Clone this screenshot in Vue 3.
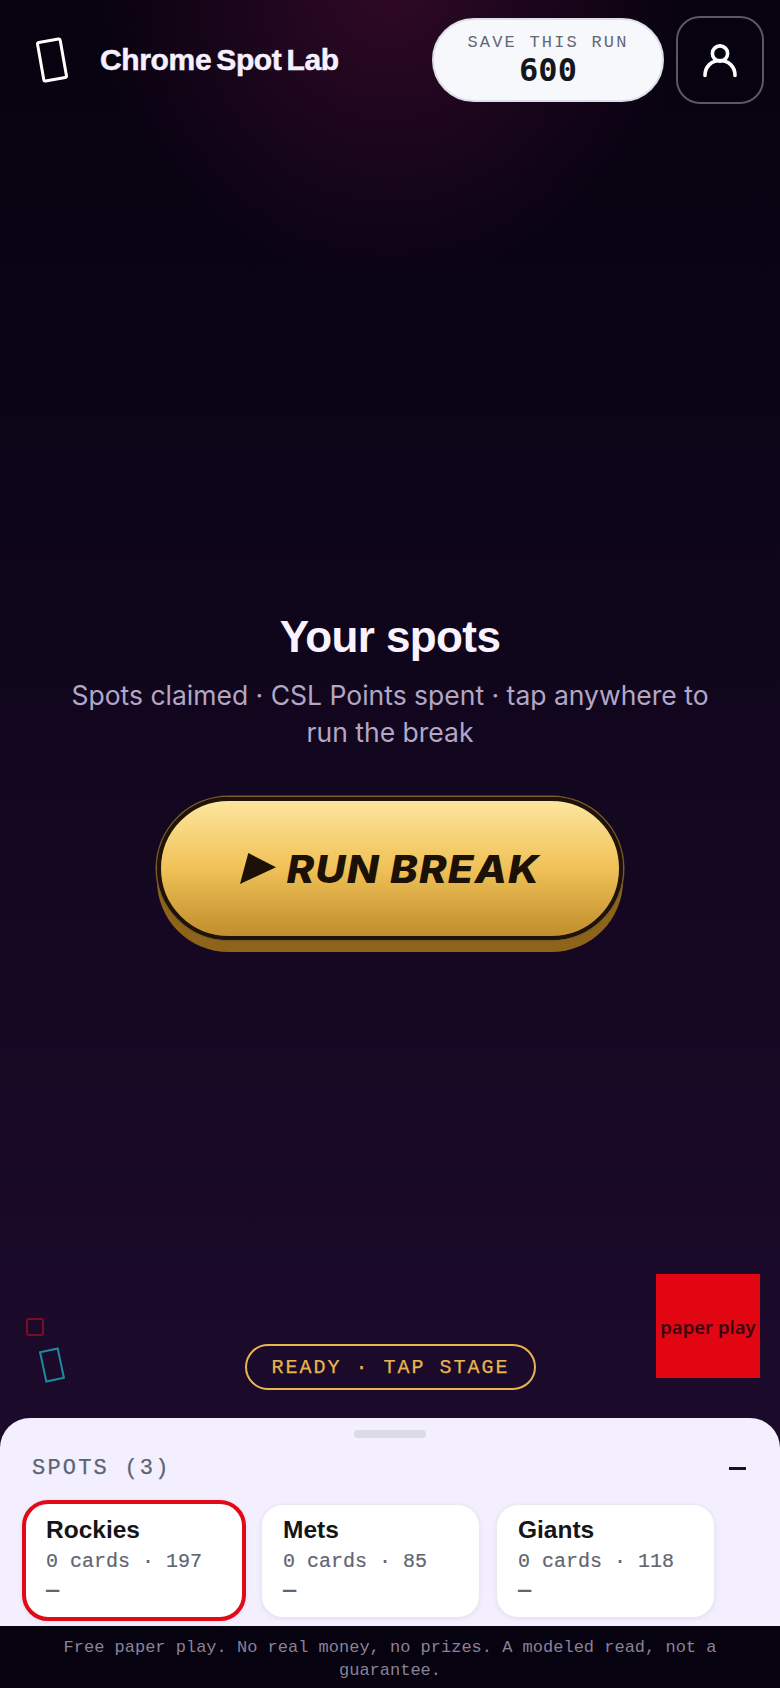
<script setup>
const spots = [
  { id: 'rockies', name: 'Rockies', cards: 0, points: 197, active: true },
  { id: 'mets', name: 'Mets', cards: 0, points: 85, active: false },
  { id: 'giants', name: 'Giants', cards: 0, points: 118, active: false },
]
</script>

<template>
  <div class="app">
    <header class="topbar">
      <div class="brand">
        <span class="brand-card"></span>
        <span class="brand-name">Chrome Spot Lab</span>
      </div>
      <button class="save-pill" type="button">
        <span class="save-label">SAVE THIS RUN</span>
        <span class="save-value">600</span>
      </button>
      <button class="profile" type="button" aria-label="Profile">
        <svg width="36" height="36" viewBox="0 0 36 36" fill="none" stroke="#fff" stroke-width="3.6" stroke-linecap="round">
          <circle cx="18" cy="11.5" r="7.6" />
          <path d="M3 33.5c0-9 6.5-15 15-15s15 6 15 15" />
        </svg>
      </button>
    </header>

    <main class="stage">
      <section class="hero">
        <h1>Your spots</h1>
        <p>Spots claimed · CSL Points spent · tap anywhere to run the break</p>
        <button class="run-btn" type="button">
          <svg class="run-play" width="36" height="31" viewBox="0 0 36 31">
            <polygon points="8.3,0 36,14.3 0,31" fill="#1c1106" />
          </svg>
          <span class="run-label">RUN BREAK</span>
        </button>
      </section>

      <div class="status">READY · TAP STAGE</div>

      <span class="float-square"></span>
      <span class="float-card"></span>
      <div class="paper-play">paper play</div>
    </main>

    <section class="sheet">
      <div class="handle"></div>
      <div class="sheet-head">
        <span class="sheet-title">SPOTS (3)</span>
        <span class="sheet-toggle"></span>
      </div>
      <div class="spot-row">
        <article v-for="spot in spots" :key="spot.id" :class="['spot', { active: spot.active }]">
          <h3>{{ spot.name }}</h3>
          <div class="spot-meta">{{ spot.cards }} cards · {{ spot.points }}</div>
          <div class="spot-dash">—</div>
        </article>
      </div>
    </section>

    <footer class="legal">Free paper play. No real money, no prizes. A modeled read, not a guarantee.</footer>
  </div>
</template>

<style>
html,
body {
  margin: 0;
  background: #05020f;
}
</style>

<style scoped>
.app {
  position: relative;
  width: 780px;
  height: 1688px;
  display: flex;
  flex-direction: column;
  overflow: hidden;
  font-family: 'Liberation Sans', Arial, sans-serif;
  background:
    radial-gradient(ellipse 300px 300px at 390px -20px, rgba(120, 20, 80, 0.36), rgba(120, 20, 80, 0) 100%),
    linear-gradient(180deg, #07020f 0%, #0d0519 30%, #140720 50%, #1b0a2a 80%, #1d0a2c 100%);
}

button {
  font: inherit;
  cursor: pointer;
}

.topbar {
  display: flex;
  align-items: center;
  height: 119px;
  box-sizing: border-box;
  padding: 0 16px 0 36px;
  flex-shrink: 0;
}

.brand {
  display: flex;
  align-items: center;
  flex: 1;
}

.brand-card {
  width: 26px;
  height: 42px;
  box-sizing: border-box;
  border: 3px solid #fff;
  border-radius: 3px;
  transform: rotate(-10deg);
  margin-left: 3px;
}

.brand-name {
  margin-left: 35px;
  font-size: 30px;
  font-weight: 700;
  letter-spacing: -0.35px;
  word-spacing: -3px;
  color: #f6f0ff;
  -webkit-text-stroke: 0.5px #f6f0ff;
}

.save-pill {
  width: 232px;
  height: 84px;
  box-sizing: border-box;
  border: 2px solid #dcdfea;
  border-radius: 42px;
  background: #f7f8fc;
  display: flex;
  flex-direction: column;
  align-items: center;
  justify-content: center;
  padding: 0;
  margin-top: 1px;
}

.save-label {
  font-family: 'Liberation Mono', monospace;
  font-size: 17px;
  line-height: 20px;
  letter-spacing: 2.2px;
  color: #626975;
}

.save-value {
  font-family: 'DejaVu Sans Mono', monospace;
  font-size: 32px;
  line-height: 34px;
  font-weight: 700;
  color: #14181d;
}

.profile {
  width: 88px;
  height: 88px;
  margin-left: 12px;
  box-sizing: border-box;
  border: 2px solid #5d5666;
  border-radius: 24px;
  background: #07020f;
  display: flex;
  align-items: center;
  justify-content: center;
  padding: 0;
}

.stage {
  position: relative;
  flex: 1;
  display: flex;
  flex-direction: column;
  align-items: center;
}

.hero {
  width: 660px;
  margin-top: 493px;
  display: flex;
  flex-direction: column;
  align-items: center;
  text-align: center;
}

.hero h1 {
  margin: 0;
  font-size: 44px;
  line-height: 50px;
  font-weight: 700;
  letter-spacing: -0.6px;
  color: #f8f3ff;
}

.hero p {
  margin: 15px 0 0;
  font-family: 'Inter', sans-serif;
  font-size: 26.5px;
  line-height: 37px;
  color: #b3a6c6;
}

.run-btn {
  width: 466px;
  height: 143px;
  margin-top: 46px;
  box-sizing: border-box;
  border: 4px solid #1f1208;
  border-radius: 72px;
  background: linear-gradient(180deg, #fde69e 0%, #f0c157 50%, #c08e2d 100%);
  box-shadow:
    0 0 0 1.5px #7b5b29,
    0 12px 0 #8d641a;
  display: flex;
  align-items: center;
  justify-content: center;
  gap: 22px;
  padding: 0;
  color: #1c1106;
  font-family: 'Inter', sans-serif;
  font-size: 38px;
  font-weight: 800;
  font-style: italic;
  letter-spacing: 1px;
}

.run-label {
  display: inline-block;
  margin-right: 12px;
  transform: scaleX(1.1);
}

.status {
  position: absolute;
  left: 245px;
  top: 1225px;
  width: 291px;
  height: 46px;
  box-sizing: border-box;
  border: 2px solid #e8b44f;
  border-radius: 23px;
  display: flex;
  align-items: center;
  justify-content: center;
  font-family: 'Liberation Mono', monospace;
  font-size: 20px;
  letter-spacing: 2px;
  color: #e8b44f;
  -webkit-text-stroke: 0.25px #e8b44f;
}

.float-square {
  position: absolute;
  left: 26px;
  top: 1199px;
  width: 18px;
  height: 18px;
  box-sizing: border-box;
  border: 2px solid #7c0b24;
  border-radius: 3px;
}

.float-card {
  position: absolute;
  left: 42px;
  top: 1230px;
  width: 20px;
  height: 32px;
  box-sizing: border-box;
  border: 2px solid #1e8aa0;
  transform: rotate(-12deg);
}

.paper-play {
  position: absolute;
  left: 656px;
  top: 1155px;
  width: 104px;
  height: 104px;
  background: #e20613;
  display: flex;
  align-items: center;
  justify-content: center;
  font-family: 'Noto Sans', sans-serif;
  font-size: 18.5px;
  font-weight: 600;
  white-space: nowrap;
  color: #38060e;
}

.sheet {
  height: 208px;
  box-sizing: border-box;
  flex-shrink: 0;
  background: #f3efff;
  border-radius: 30px 30px 0 0;
  padding-top: 12px;
  overflow: hidden;
}

.handle {
  width: 72px;
  height: 8px;
  margin: 0 auto;
  border-radius: 4px;
  background: #d9dbe7;
}

.sheet-head {
  display: flex;
  align-items: center;
  justify-content: space-between;
  height: 26px;
  margin-top: 17px;
  padding: 0 34px 0 32px;
}

.sheet-title {
  font-family: 'Liberation Mono', monospace;
  font-size: 22px;
  letter-spacing: 2.2px;
  color: #5c6573;
  -webkit-text-stroke: 0.25px #5c6573;
}

.sheet-toggle {
  width: 17px;
  height: 3px;
  background: #14161b;
}

.spot-row {
  display: flex;
  align-items: center;
  gap: 16px;
  margin-top: 19px;
  padding-left: 22px;
}

.spot {
  width: 219px;
  height: 114px;
  box-sizing: border-box;
  padding: 11px 0 0 21px;
  background: #fff;
  border: 1px solid #eae8f1;
  border-radius: 22px;
  box-shadow: 0 1px 4px rgba(40, 30, 70, 0.08);
}

.spot.active {
  width: 224px;
  height: 121px;
  padding: 12px 0 0 20px;
  border: 4px solid #e20a17;
  border-radius: 26px;
  margin-right: -1px;
}

.spot h3 {
  margin: 0;
  font-size: 24.5px;
  line-height: 28px;
  font-weight: 700;
  color: #131518;
}

.spot-meta {
  margin-top: 5px;
  font-family: 'Liberation Mono', monospace;
  font-size: 20px;
  line-height: 26px;
  color: #5f6672;
  -webkit-text-stroke: 0.2px #5f6672;
}

.spot-dash {
  margin-top: 3px;
  font-family: 'Liberation Mono', monospace;
  font-size: 22px;
  line-height: 28px;
  font-weight: 700;
  color: #5f6672;
}

.legal {
  height: 62px;
  box-sizing: border-box;
  flex-shrink: 0;
  padding: 10px 50px 0;
  background: #07020f;
  text-align: center;
  font-family: 'Liberation Mono', monospace;
  font-size: 17px;
  line-height: 23px;
  color: #8a8198;
}
</style>
